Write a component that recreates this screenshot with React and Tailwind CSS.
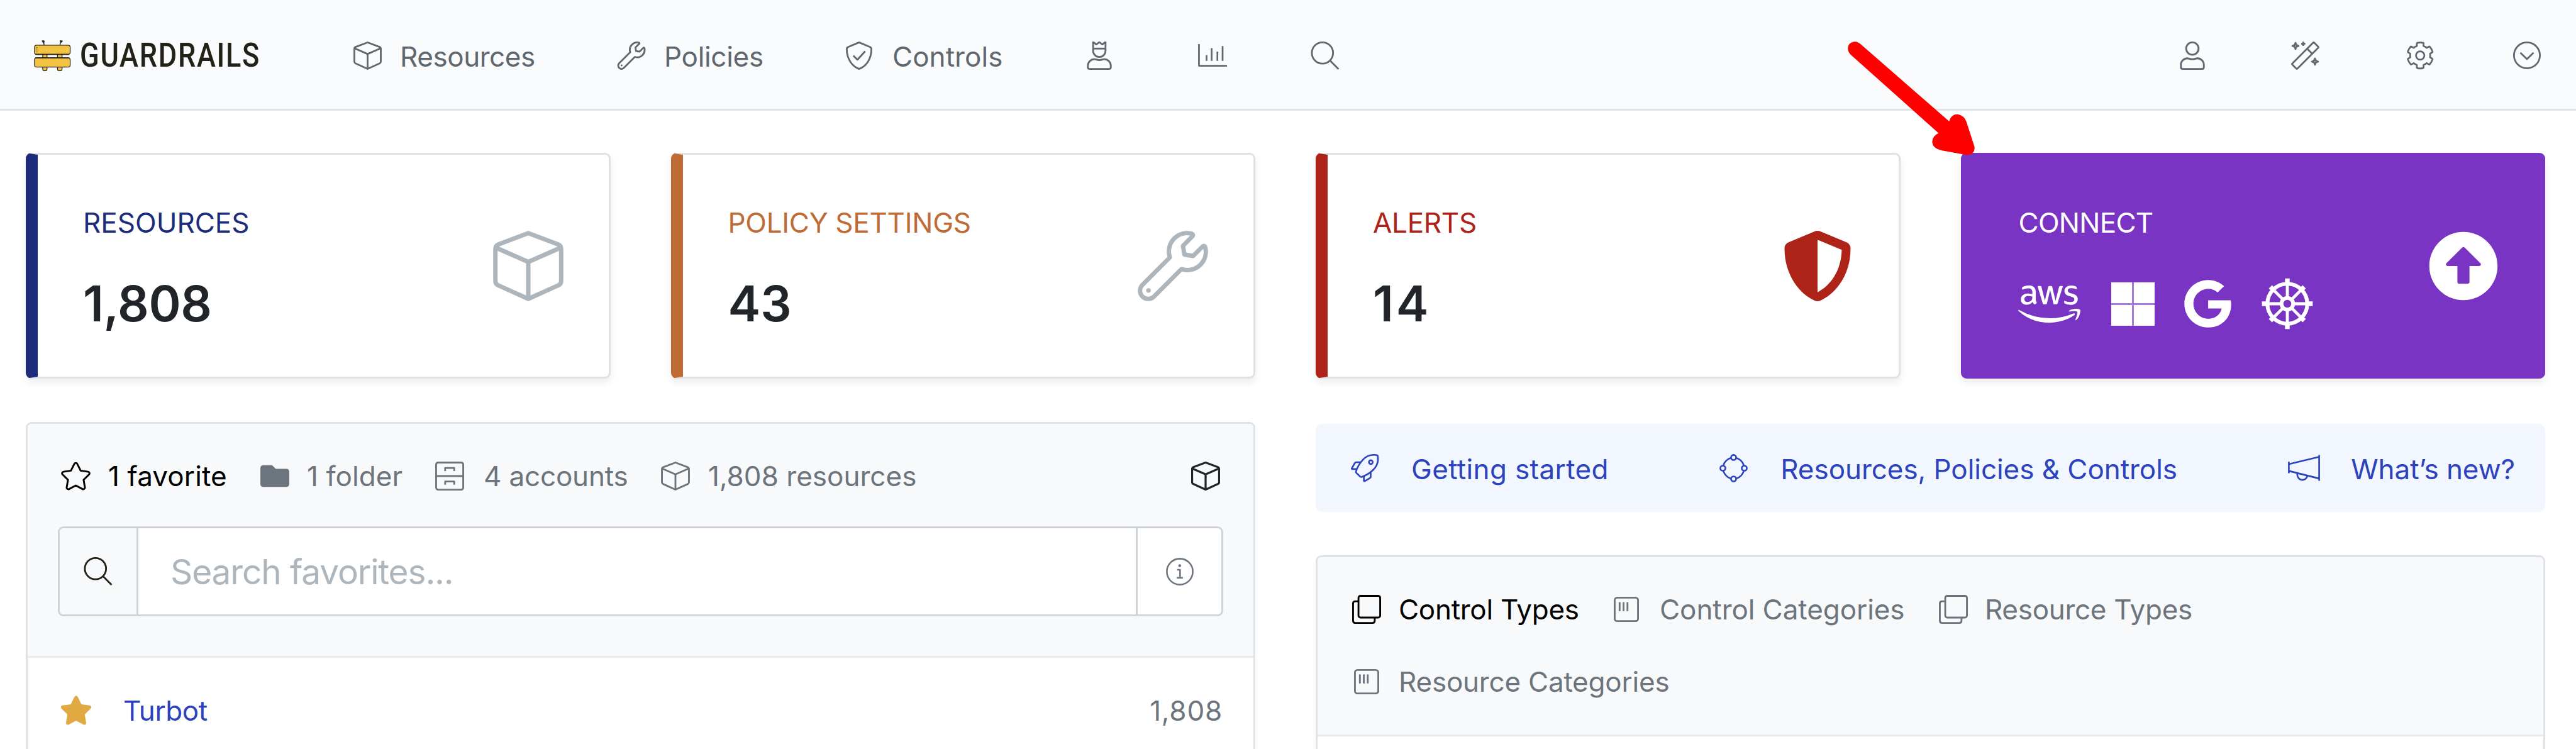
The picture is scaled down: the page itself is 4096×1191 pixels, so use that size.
import React from "react";
import {
  FaAws,
  FaGoogle,
  FaArrowAltCircleUp,
  FaShieldAlt,
  FaFolder,
  FaStar,
  FaCog,
} from "react-icons/fa";

/* ---------- line icons ---------- */

function Line({ vb = "0 0 512 512", className = "", sw = 32, children }) {
  return (
    <svg
      viewBox={vb}
      className={`block shrink-0 ${className}`}
      fill="none"
      stroke="currentColor"
      strokeWidth={sw}
      strokeLinejoin="round"
      aria-hidden="true"
    >
      {children}
    </svg>
  );
}

const Cube = ({ className, sw = 32 }) => (
  <Line className={className} sw={sw}>
    <path d="M256 17 472 98q23 9 23 33v233q0 22-20 32L256 495 37 396q-20-10-20-32V131q0-24 23-33L256 17Z" />
    <path d="M20 122 256 226 492 122M256 226V495" />
  </Line>
);

const Wrench = ({ className }) => (
  <Line vb="-18 -18 548 548" className={className} sw={34}>
    <path d="M507.73 109.1c-2.24-9.03-13.54-12.09-20.12-5.51l-74.36 74.36-67.88-11.31-11.31-67.88 74.36-74.36c6.62-6.62 3.43-17.9-5.66-20.16-47.38-11.74-99.55.91-136.58 37.93-39.64 39.64-50.55 97.1-34.05 147.2L18.74 402.76c-24.99 24.99-24.99 65.51 0 90.5 24.99 24.99 65.51 24.99 90.5 0l213.21-213.21c50.12 16.71 107.47 5.68 147.37-34.22 37.07-37.07 49.7-89.32 37.91-136.73z" />
    <circle cx="66" cy="446" r="18" fill="currentColor" stroke="none" />
  </Line>
);

const ShieldCheck = ({ className }) => (
  <Line vb="16 0 480 512" className={className}>
    <path d="M262 19 454 99q25 11 25 38C479 320 384 445 262 494q-6 2-12 0C138 448 33 325 33 137q0-27 25-38L250 19q6-2 12 0Z" />
    <path d="M152 256 226 330 366 176" />
  </Line>
);

const UserCrown = ({ className }) => (
  <Line vb="0 0 448 512" className={className}>
    <path d="M112 8V168a112 112 0 0 0 224 0V8L280 52 224 12 168 52 112 8Z" />
    <path d="M112 128H336" />
    <path d="M313 320c-28 0-42 16-89 16s-61-16-89-16C70 320 16 373 16 438v26q0 32 32 32H400q32 0 32-32V438c0-65-54-118-119-118Z" />
  </Line>
);

const User = ({ className }) => (
  <Line vb="0 0 448 512" className={className}>
    <circle cx="224" cy="128" r="112" />
    <path d="M313 304c-28 0-42 16-89 16s-61-16-89-16C70 304 16 357 16 422v42q0 32 32 32H400q32 0 32-32V422c0-65-54-118-119-118Z" />
  </Line>
);

const Chart = ({ className }) => (
  <Line vb="0 0 512 400" className={className} sw={30}>
    <path d="M16 0V384H512" />
    <path d="M150 198V298M240 72V298M342 132V298M434 36V298" />
  </Line>
);

const Search = ({ className }) => (
  <Line className={className}>
    <circle cx="208" cy="208" r="192" />
    <path d="M344 344 500 500" />
  </Line>
);

const Wand = ({ className }) => (
  <Line className={className} sw={32}>
    <path d="M397 22q11-9 22 0l71 71q10 11 0 22L115 490q-11 10-22 0L22 419q-10-11 0-22L397 22Z" />
    <path d="M290 130 382 222" />
    <path d="M80 24 96 64 136 80 96 96 80 136 64 96 24 80 64 64Z" />
    <path d="M432 308 448 348 488 364 448 380 432 420 416 380 376 364 416 348Z" />
    <path d="M220 4V80M182 42H258" />
  </Line>
);

const ChevronCircle = ({ className }) => (
  <Line className={className}>
    <circle cx="256" cy="256" r="240" />
    <path d="M134 206 256 326 378 206" />
  </Line>
);

const Archive = ({ className }) => (
  <Line className={className}>
    <rect x="16" y="16" width="480" height="480" rx="36" />
    <path d="M16 256H496M176 168V112H336V168M176 408V352H336V408" />
  </Line>
);

const Info = ({ className }) => (
  <Line className={className} sw={30}>
    <circle cx="256" cy="256" r="240" />
    <path d="M208 222H260V368M200 368H312" />
    <circle cx="254" cy="146" r="26" fill="currentColor" stroke="none" />
  </Line>
);

const Rocket = ({ className }) => (
  <Line className={className} sw={30}>
    <path d="M488 22C400 4 296 24 222 104C164 168 116 252 98 318Q96 330 104 340L176 410Q186 418 198 414C262 394 346 348 408 288C488 210 508 112 488 22Z" />
    <path d="M186 148H102Q86 148 78 162L22 258Q16 272 32 272H112M240 400V480Q242 496 256 490L350 434Q364 426 364 410V328" />
    <circle cx="366" cy="146" r="34" />
  </Line>
);

const Nodes = ({ className }) => (
  <Line className={className} sw={30}>
    <circle cx="256" cy="256" r="190" />
    <g fill="#f2f7ff">
      <circle cx="256" cy="62" r="46" />
      <circle cx="256" cy="450" r="46" />
      <circle cx="62" cy="256" r="46" />
      <circle cx="450" cy="256" r="46" />
    </g>
  </Line>
);

const Megaphone = ({ className }) => (
  <Line vb="0 0 576 466" className={className} sw={30}>
    <path d="M16 124V328M560 2V464M18 166 558 36M18 288 558 424" />
    <path d="M168 326C150 470 330 490 346 372" />
  </Line>
);

const Copy = ({ className }) => (
  <Line className={className}>
    <rect x="112" y="16" width="384" height="384" rx="36" />
    <path d="M112 112H56q-40 0-40 40V456q0 40 40 40H360q40 0 40-40V400" />
  </Line>
);

const Category = ({ className }) => (
  <Line vb="0 0 448 448" className={className}>
    <rect x="16" y="16" width="416" height="416" rx="44" />
    <path d="M104 96V256M174 96V256M244 96V256" />
  </Line>
);

const Wheel = ({ className }) => (
  <Line className={className} sw={38}>
    <circle cx="256" cy="256" r="198" />
    <circle cx="256" cy="256" r="58" sw="34" />
    <path
      d="M256 200V60M256 312V452M200 256H60M312 256H452M216 216 116 116M296 296 396 396M296 216 396 116M216 296 116 396"
      strokeWidth="30"
    />
    <path
      d="M256 60V4M256 452V508M60 256H4M452 256H508M116 116 88 88M396 396 424 424M396 116 424 88M116 396 88 424"
      strokeWidth="46"
    />
  </Line>
);

const StarLine = () => (
  <span className="flex h-[46px] w-[47px] shrink-0 items-center justify-center">
    <FaStar className="h-[42px] w-[47px] overflow-visible" fill="none" strokeWidth={36} strokeLinejoin="round" />
  </span>
);

const Gear = () => (
  <span className="ml-[138px] flex h-[45px] w-[44px] shrink-0 items-center justify-center">
    <FaCog className="h-[42.5px] w-[42.5px] overflow-visible" fill="none" strokeWidth={33} strokeLinejoin="round" />
  </span>
);

const Logo = () => (
  <svg viewBox="68 73 74 64" className="ml-[54px] block h-[51px] w-[59px] shrink-0" aria-hidden="true">
    <g fill="#f3c344" stroke="#242118" strokeWidth="1.6">
      <rect x="85.5" y="100" width="8.5" height="35" rx="3" />
      <rect x="115" y="100" width="9" height="35" rx="3" />
      <rect x="69.2" y="84" width="71" height="18.5" rx="4" />
      <rect x="69.2" y="109.3" width="71" height="18.5" rx="4" />
    </g>
    <path d="M71 102.5H138M71 109.3H138" stroke="#242118" strokeWidth="2" fill="none" />
    <path d="M88.4 83.5 86.5 76M119.8 83.5 121.8 76" stroke="#242118" strokeWidth="1.8" fill="none" />
    <path d="M84 75.2h4.4v3.6h-2.6zM119.600 75.2h5v2l-3 2z" fill="#242118" stroke="#242118" />
    <path d="M74 88V98" stroke="#242118" strokeWidth="1.4" strokeDasharray="2.2 2.2" />
  </svg>
);

/* ---------- page parts ---------- */

function Text({ className = "", children }) {
  return <span className={`shrink-0 whitespace-nowrap text-[44px] leading-[56px] ${className}`}>{children}</span>;
}

function Header() {
  return (
    <header className="flex h-[176px] items-center border-b-[3px] border-[#dfe2e7] bg-[#fafbfd] pt-[3px] pr-[56px] text-[#5f676f]">
      <Logo />
      <div className="ml-[14px] w-[288px] shrink-0">
        <div className="w-[360px] origin-left scale-x-[0.852] whitespace-nowrap font-['Roboto',sans-serif] text-[52.9px] leading-[60px] font-medium tracking-[2px] text-[#242118]">
          GUARDRAILS
        </div>
      </div>
      <Cube className="ml-[147px] h-[45px] w-[45px]" />
      <Text className="ml-[29px] w-[218px] pt-[3px] tracking-[-0.45px]">Resources</Text>
      <Wrench className="ml-[127px] h-[45px] w-[46px]" />
      <Text className="ml-[29px] w-[160px] pt-[3px] tracking-[-0.3px]">Policies</Text>
      <ShieldCheck className="ml-[128px] h-[45px] w-[44px]" />
      <Text className="ml-[31px] w-[178px] pt-[3px] tracking-[0.05px]">Controls</Text>
      <UserCrown className="ml-[131px] h-[45px] w-[40px]" />
      <Chart className="ml-[137px] h-[36px] w-[46px]" />
      <Search className="ml-[133px] h-[45px] w-[46px]" />
      <User className="ml-auto h-[45px] w-[40px]" />
      <Wand className="ml-[137px] h-[45px] w-[45px]" />
      <Gear />
      <ChevronCircle className="ml-[126px] h-[44px] w-[44px]" />
    </header>
  );
}

function StatCard({ bar, tone, label, track, value, valueTrack, children }) {
  return (
    <section
      className={`flex h-[359px] justify-between rounded-[9px] border-[3px] border-l-[19px] border-[#dee2e6] bg-white pr-[72px] pl-[72px] shadow-[0_6px_13px_rgba(0,0,0,0.08)] ${bar}`}
    >
      <div className="pt-[78px]">
        <div className={`whitespace-nowrap text-[44px] leading-[60px] ${track} ${tone}`}>{label}</div>
        <div
          className={`mt-[54px] whitespace-nowrap text-[77.7px] leading-[90px] font-semibold text-[#212529] ${valueTrack}`}
        >
          {value}
        </div>
      </div>
      <div className="flex items-center">{children}</div>
    </section>
  );
}

function WindowsTiles() {
  return (
    <span className="ml-[49px] grid h-[69px] w-[69px] shrink-0 grid-cols-2 gap-[3px] bg-[#a97bd9]">
      <i className="bg-white" />
      <i className="bg-white" />
      <i className="bg-white" />
      <i className="bg-white" />
    </span>
  );
}

function ConnectCard() {
  return (
    <section className="flex h-[359px] justify-between rounded-[9px] bg-[#7a34c3] pr-[74px] pl-[91px] text-white shadow-[0_6px_13px_rgba(0,0,0,0.08)]">
      <div className="pt-[81px]">
        <div className="pl-[1px] text-[44px] leading-[60px] tracking-[-0.73px]">CONNECT</div>
        <div className="mt-[54px] flex h-[90px] items-center">
          <FaAws className="h-[79px] w-[99px] shrink-0" />
          <WindowsTiles />
          <FaGoogle className="ml-[46px] h-[78px] w-[77px] shrink-0" />
          <Wheel className="ml-[47px] h-[82px] w-[82px]" />
        </div>
      </div>
      <div className="flex items-center">
        <FaArrowAltCircleUp className="h-[112px] w-[112px]" />
      </div>
    </section>
  );
}

function FavoritesPanel() {
  return (
    <section className="h-[540px] rounded-t-[9px] border-[3px] border-[#dee2e6] bg-white">
      <div className="rounded-t-[6px] border-b-[3px] border-[#e9ebef] bg-[#f8f9fb] pb-[63px]">
        <div className="flex items-center px-[53px] pt-[55px] text-[#6c757d]">
          <span className="flex items-center text-black">
            <StarLine />
            <Text className="ml-[28px] w-[192px] tracking-[0.1px]">1 favorite</Text>
          </span>
          <FaFolder className="ml-[50px] h-[46px] w-[46px] shrink-0" />
          <Text className="ml-[28px] w-[156px] tracking-[0.08px]">1 folder</Text>
          <Archive className="ml-[48px] h-[46px] w-[46px]" />
          <Text className="ml-[31px] w-[232px] tracking-[-0.18px]">4 accounts</Text>
          <Cube className="ml-[50px] h-[46px] w-[46px]" />
          <Text className="ml-[29px] tracking-[0.02px]">1,808 resources</Text>
          <Cube className="ml-auto h-[46px] w-[46px] text-[#212529]" sw={36} />
        </div>
        <div className="mx-[48px] mt-[52px] flex h-[143px] overflow-hidden rounded-[9px] border-[3px] border-[#ced4da] bg-white">
          <div className="flex w-[125px] shrink-0 items-center justify-center border-r-[3px] border-[#ced4da] bg-[#f8f9fb] text-[#242118]">
            <Search className="h-[45px] w-[46px]" />
          </div>
          <div className="flex flex-1 items-center pl-[51px] text-[55px] leading-[70px] tracking-[-1.15px] text-[#adb5bd]">
            Search favorites...
          </div>
          <div className="flex w-[136px] shrink-0 items-center justify-center border-l-[3px] border-[#ced4da] text-[#6c757d]">
            <Info className="h-[44px] w-[44px]" />
          </div>
        </div>
      </div>
      <div className="flex h-[167px] items-center px-[53px]">
        <span className="flex h-[46px] w-[47px] shrink-0 items-center justify-center text-[#e0a941]">
          <FaStar className="h-[47px] w-[52px] shrink-0" />
        </span>
        <Text className="ml-[52px] pt-[1px] tracking-[-0.4px] text-[#2c43bd]">Turbot</Text>
        <Text className="mr-[-4px] ml-auto pt-[1px] tracking-[0.81px] text-[#6c757d]">1,808</Text>
      </div>
    </section>
  );
}

function HelpLinks() {
  return (
    <nav className="mt-[3px] flex h-[140px] items-center rounded-[10px] bg-[#f2f7ff] pr-[48px] pl-[55px] text-[#2c43bd]">
      <Rocket className="h-[45px] w-[46px]" />
      <Text className="ml-[51px] pt-[4px] tracking-[0.35px]">Getting started</Text>
      <Nodes className="ml-auto h-[45px] w-[45px]" />
      <Text className="ml-[52px] pt-[4px] tracking-[-0.05px]">Resources, Policies &amp; Controls</Text>
      <Megaphone className="ml-auto h-[42px] w-[51px]" />
      <Text className="ml-[49px] pt-[4px] tracking-[-0.08px]">What’s new?</Text>
    </nav>
  );
}

function TypesPanel() {
  return (
    <section className="mt-[69px] h-[340px] rounded-t-[9px] border-[3px] border-[#dee2e6] bg-white">
      <div className="rounded-t-[6px] border-b-[3px] border-[#e9ebef] bg-[#f8f9fb] px-[55px] pt-[55px] pb-[56px] text-[#6c757d]">
        <div className="flex items-center">
          <Copy className="h-[46px] w-[46px] text-black" />
          <Text className="ml-[28px] w-[292px] tracking-[-0.28px] text-black">Control Types</Text>
          <Category className="ml-[50px] h-[40px] w-[40px]" />
          <Text className="ml-[33px] w-[396px] tracking-[-0.07px]">Control Categories</Text>
          <Copy className="ml-[48px] h-[46px] w-[46px]" />
          <Text className="ml-[27px] tracking-[-0.3px]">Resource Types</Text>
        </div>
        <div className="mt-[59px] flex items-center">
          <Category className="ml-[3px] h-[40px] w-[40px]" />
          <Text className="ml-[31px] tracking-[-0.22px]">Resource Categories</Text>
        </div>
      </div>
    </section>
  );
}

function PointerArrow() {
  return (
    <svg viewBox="3660 70 280 250" className="absolute top-[56px] left-[2931px] h-[200px] w-[224px]" aria-hidden="true">
      <path
        d="M3697 90 3870.500 241.300C3874 229 3882 226 3889 227.500Q3900 230 3904.500 241.500L3920.500 291Q3923 306 3907 308.500L3856 299Q3838 296 3836.700 282Q3837 270 3849.300 264.700L3674 108Q3665 97 3672 87.500Q3684 77 3697 90Z"
        fill="#ff0000"
      />
    </svg>
  );
}

export default function App() {
  return (
    <div className="relative h-[1191px] w-[4096px] overflow-hidden bg-white font-['Inter',sans-serif] font-[430]">
      <Header />
      <main className="px-[41px] pt-[67px]">
        <div className="grid w-[4006px] grid-cols-4 gap-[96px]">
          <StatCard
            bar="border-l-[#1d2b7b]"
            tone="text-[#1d2b7b]"
            label="RESOURCES"
            track="tracking-[0px]"
            value="1,808"
            valueTrack="tracking-[-0.3px]"
          >
            <Cube className="h-[112px] w-[112px] text-[#adb5bd]" />
          </StatCard>
          <StatCard
            bar="border-l-[#be6b36]"
            tone="text-[#be6b36]"
            label="POLICY SETTINGS"
            track="tracking-[-0.28px]"
            value="43"
            valueTrack="tracking-[0px]"
          >
            <Wrench className="h-[112px] w-[112px] text-[#adb5bd]" />
          </StatCard>
          <StatCard
            bar="border-l-[#ae2318]"
            tone="text-[#ae2318]"
            label="ALERTS"
            track="tracking-[-0.3px]"
            value="14"
            valueTrack="tracking-[3.8px]"
          >
            <FaShieldAlt className="mr-[1px] h-[112px] w-[112px] text-[#ae2318]" />
          </StatCard>
          <ConnectCard />
        </div>
        <div className="mt-[69px] grid w-[4006px] grid-cols-2 gap-[96px]">
          <FavoritesPanel />
          <div>
            <HelpLinks />
            <TypesPanel />
          </div>
        </div>
      </main>
      <PointerArrow />
    </div>
  );
}
